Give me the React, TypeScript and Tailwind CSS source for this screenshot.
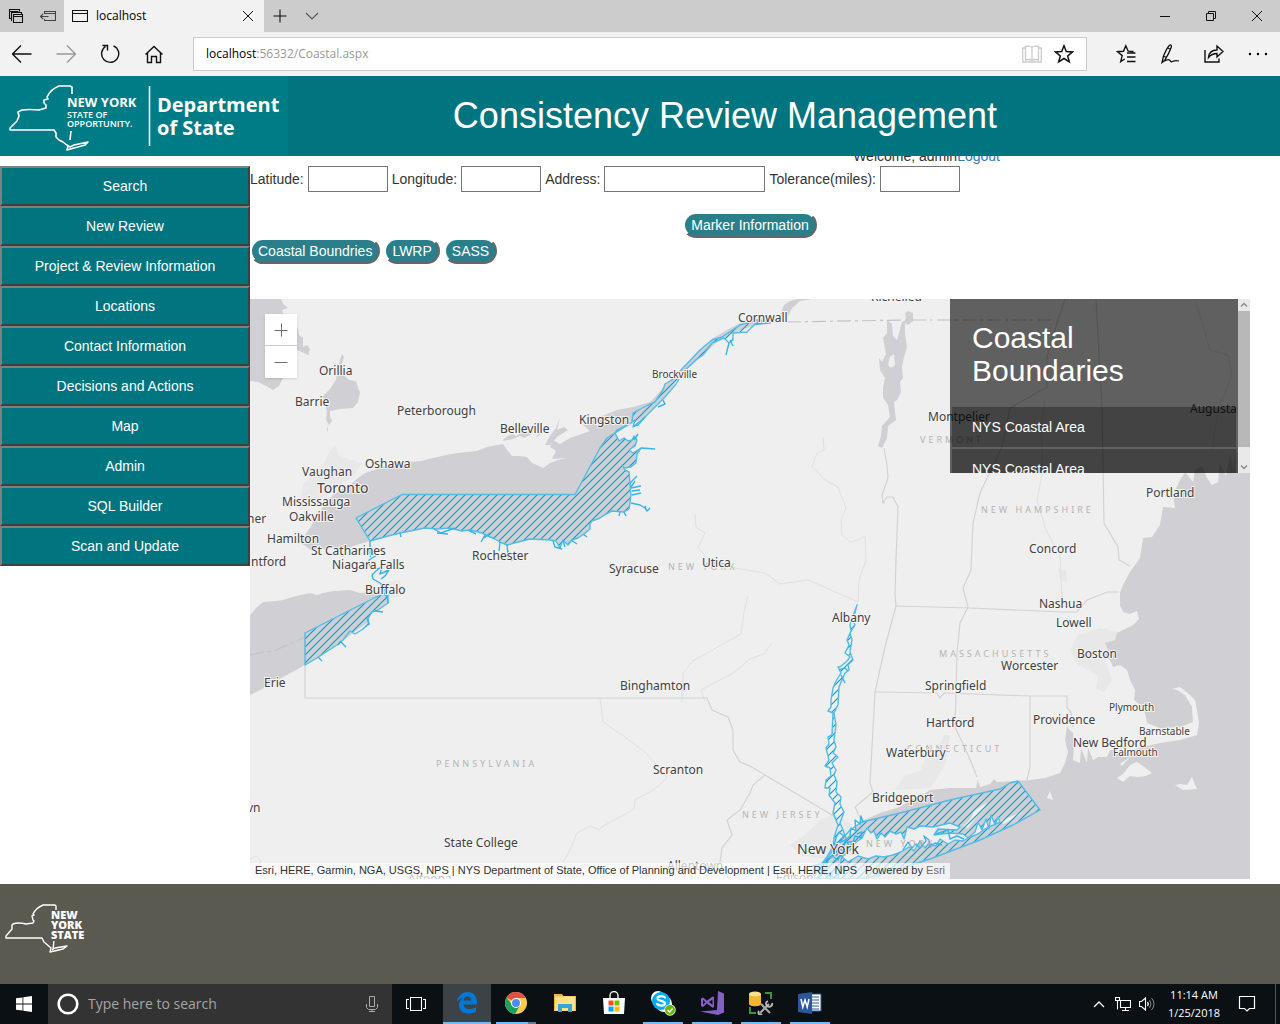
import type { ReactNode } from "react";

const SEGOE = "font-['Open_Sans','Noto_Sans',sans-serif]";

const navItems = [
  "Search",
  "New Review",
  "Project & Review Information",
  "Locations",
  "Contact Information",
  "Decisions and Actions",
  "Map",
  "Admin",
  "SQL Builder",
  "Scan and Update",
];

type LineIconProps = { size?: number; stroke?: string; children: ReactNode };

function LineIcon({ size = 20, stroke = "#111", children }: LineIconProps) {
  return (
    <svg width={size} height={size} viewBox={`0 0 ${size} ${size}`} fill="none" stroke={stroke} strokeWidth="1.3" aria-hidden="true">
      {children}
    </svg>
  );
}

function IconButton({ label, className, children }: { label: string; className: string; children: ReactNode }) {
  return (
    <button type="button" aria-label={label} className={`flex shrink-0 items-center justify-center ${className}`}>
      {children}
    </button>
  );
}

function TitleBar() {
  return (
    <div className="flex h-8 items-stretch bg-[#cccccc]">
      <IconButton label="Tabs you've set aside" className="w-8">
        <LineIcon size={16}>
          <path d="M3.500 10.500h-2v-9h10v2M1.500 3.500h9M4 12.500h-.5v-8h10v2M5.500 6.500h9v8h-9zM5.500 8.500h9" strokeWidth="1.1" />
        </LineIcon>
      </IconButton>
      <IconButton label="Set these tabs aside" className="w-8">
        <LineIcon size={16} stroke="#444">
          <path d="M4.500 6V3.500h11v9h-11V11M4.500 5.500h11M.5 8.500h8M3 6 .5 8.500 3 11" strokeWidth="1.1" />
        </LineIcon>
      </IconButton>
      <div className="flex w-[200px] items-center bg-[#f2f2f2] px-2">
        <LineIcon size={16}>
          <path d="M.5 2.500h15v11H.5zM.5 5.500h15" strokeWidth="1.1" />
        </LineIcon>
        <span className="ml-2 flex-1 text-xs text-black">localhost</span>
        <IconButton label="Close tab" className="size-4">
          <LineIcon size={12}>
            <path d="m1 1 10 10M11 1 1 11" strokeWidth="1" />
          </LineIcon>
        </IconButton>
      </div>
      <IconButton label="New tab" className="w-8">
        <LineIcon size={14}>
          <path d="M7 .5v13M.5 7h13" strokeWidth="1.1" />
        </LineIcon>
      </IconButton>
      <IconButton label="Show tab previews" className="w-8">
        <LineIcon size={14} stroke="#555">
          <path d="m1 4 6 6 6-6" strokeWidth="1.1" />
        </LineIcon>
      </IconButton>
      <div className="flex-1" />
      <IconButton label="Minimize" className="w-[46px]">
        <LineIcon size={10}>
          <path d="M0 5.500h10" strokeWidth="1" />
        </LineIcon>
      </IconButton>
      <IconButton label="Restore" className="w-[46px]">
        <LineIcon size={10}>
          <path d="M.5 2.500h7v7h-7zM2.500 2.500v-2h7v7h-2" strokeWidth="1" />
        </LineIcon>
      </IconButton>
      <IconButton label="Close" className="w-[46px]">
        <LineIcon size={10}>
          <path d="m0 0 10 10M10 0 0 10" strokeWidth="1" />
        </LineIcon>
      </IconButton>
    </div>
  );
}

function AddressBar() {
  return (
    <div className="flex h-11 items-center bg-[#f2f2f2]">
      <IconButton label="Back" className="w-11">
        <LineIcon size={20}>
          <path d="M.5 10h19M9 1.500.5 10 9 18.500" strokeWidth="1.400" />
        </LineIcon>
      </IconButton>
      <IconButton label="Forward" className="w-11">
        <LineIcon size={20} stroke="#999">
          <path d="M.5 10h19M11 1.500l8.500 8.500-8.500 8.500" strokeWidth="1.400" />
        </LineIcon>
      </IconButton>
      <IconButton label="Refresh" className="w-11">
        <LineIcon size={20}>
          <path d="M13.500 1.800A8.600 8.600 0 1 1 5.500 2.500M2.500 1.500h5v5" strokeWidth="1.400" />
        </LineIcon>
      </IconButton>
      <IconButton label="Home" className="w-11">
        <LineIcon size={20}>
          <path d="m1.500 10.500 8.500-8 8.500 8M3.500 9v9.500h4v-6h5v6h4V9" strokeWidth="1.400" />
        </LineIcon>
      </IconButton>
      <div className="ml-[17px] flex h-[34px] flex-1 items-center border border-[#cccccc] bg-white pr-1.5 pl-3 text-xs">
        <span className="flex-1 text-[#999]">
          <span className="text-black">localhost</span>:56332/Coastal.aspx
        </span>
        <IconButton label="Reading view" className="w-8">
          <LineIcon size={20} stroke="#ccc">
            <path d="M10 3.500C9 2 5.500 2 3.500 2.500v13.500c2-.5 5.500-.5 6.500.5 1-1 4.500-1 6.500-.5V2.500C14.500 2 11 2 10 3.500zv13M3.500 4H.700v14h18.600V4h-2.800" />
          </LineIcon>
        </IconButton>
        <IconButton label="Add to favorites" className="w-8">
          <LineIcon size={20}>
            <path d="m10 1.800 2.300 5.700 6.200.4-4.800 4 1.600 6L10 14.500l-5.300 3.400 1.600-6-4.800-4 6.200-.4z" strokeWidth="1.500" />
          </LineIcon>
        </IconButton>
      </div>
      <IconButton label="Hub" className="ml-[17px] w-11">
        <LineIcon size={20}>
          <path d="M11 9h8.500M11 13h8.500M11 17.500h8.500M17.500 7.500l-5.300-.3-2.400-5.400-2.300 5.500-6 .4 4.700 3.900-1.500 6 4-2.600" strokeWidth="1.400" />
        </LineIcon>
      </IconButton>
      <IconButton label="Add notes" className="w-11">
        <LineIcon size={20}>
          <path d="M2 18.500 3.500 12C6 6 8 2.500 9.500 1.200c1.500-.8 2.300.5 1.700 2C10 7 7 12.500 4.500 16.500zM3.500 12l2.700 1.500M8 4l2.500 1.500M2 18.500c3-2 6-3.500 7.500-2.500s1 2.500 3 1.500 3-1.500 6.500-.500" />
        </LineIcon>
      </IconButton>
      <IconButton label="Share" className="w-11">
        <LineIcon size={20}>
          <path d="M1 6v12h14v-3.500M4.500 13.500c.5-5 4-7.500 8.500-7.500V2l6 5.500-6 5.500V9.500c-3.500 0-6 1-8.500 4z" strokeWidth="1.400" />
        </LineIcon>
      </IconButton>
      <IconButton label="More" className="w-11">
        <svg width="20" height="4" viewBox="0 0 20 4" aria-hidden="true">
          <circle cx="2" cy="2" r="1.200" />
          <circle cx="10" cy="2" r="1.200" />
          <circle cx="18" cy="2" r="1.200" />
        </svg>
      </IconButton>
    </div>
  );
}

const stateOutline =
  "M72 18V11l-2-1H59q-8 3-12 11l1 2-4 1v3l2 2v3l-7 2q-10-1-17 0l-4 2 1 4-2 5-7 7v2h44l2 3v4l3 3 4 2 5 4-1 4 18-5 3-3-14 3-4 2-3-2M71 55l-1 9";

function DepartmentLogo() {
  return (
    <svg width="288" height="80" viewBox="0 0 288 80" className="shrink-0 bg-[#007c87]" role="img" aria-label="New York State of Opportunity. Department of State">
      <path d={stateOutline} fill="none" stroke="#fff" strokeWidth="1.600" strokeLinejoin="round" />
      <path d="M149.500 10v60" stroke="#fff" strokeWidth="1.500" />
      <g fill="#fff" className="font-['Open_Sans',sans-serif]">
        <text x="67" y="31" className="text-[13px] font-bold">NEW YORK</text>
        <text x="67" y="42" className="text-[9px] font-semibold">STATE OF</text>
        <text x="67" y="51" className="text-[9px] font-semibold">OPPORTUNITY.</text>
        <text x="157" y="36" className="text-[20px] font-bold">Department</text>
        <text x="157" y="59" className="text-[20px] font-bold">of State</text>
      </g>
    </svg>
  );
}

function FooterLogo() {
  return (
    <svg width="90" height="60" viewBox="0 0 90 60" role="img" aria-label="New York State">
      <path
        d="M56 10V6l-1-1H43q-7 3-10 9l1 1-2 1 1 4 1 1-1 2-7 1q-8-2-13 0l-1 1v4l-6 7v2h36l2 4 7 6-1 4 13-3 4-3-12 2-3 2M54 41l-1 8"
        fill="none"
        stroke="#fff"
        strokeWidth="1.400"
        strokeLinejoin="round"
      />
      <g fill="#fff" className="font-['Open_Sans',sans-serif] text-[11px] font-extrabold">
        <text x="51" y="19">NEW</text>
        <text x="51" y="29">YORK</text>
        <text x="51" y="39">STATE</text>
      </g>
    </svg>
  );
}

const lakeSouthShore =
  "L616 435 619 441 624 438 628 441 632 440 634 436 637 440 635 446 629 450 633 453 641 448 637 454 636 463 631 467 624 468 622 465 625 470 629 472 630 484 631 495 630 503 629 509 624 512 612 511 606 514 600 518 592 521 590 524 590 529 584 534 578 538 572 540 568 545 563 540 560 548 556 541 550 540 530 539 518 542 507 545 500 542 495 539 488 536 482 533 470 530 462 531 450 528 437 529 425 528 410 531 400 533 388 536 370 541";

const hudson =
  "M857 605 853 616 850 625 851 631 847 640 849 645 845 653 850 657 847 661 840 667 838 667 841 673 836 681 833 688 831 700 831 707 828 711 833 713 832 735 828 737 829 744 826 748 829 760 825 766 830 768 831 776 826 780 825 788 830 788 829 795 835 803 833 813 838 825 834 838 833 846 827 857 820 866 811 879 838 879 842 855 846 838 843 830 840 823 844 812 840 804 841 797 836 792 837 782 834 775 836 770 832 763 838 757 833 753 836 747 834 740 836 725 834 713 838 705 839 687 845 673 849 670 848 665 853 660 850 652 852 640 850 633 855 625 853 620Z";

const longIslandInner =
  "M862 838 867 828 871 833 874 831 877 839 881 833 885 837 890 831 896 834 901 832 904 839 907 827 914 829 920 826 933 827 950 823 960 827 957 830 938 829 934 835 950 833 963 834 968 838 975 832 978 822 982 830 986 819 989 829 991 815 995 825 998 817 1000 822 985 829 978 834 968 838 963 841 955 840 948 844 940 839 936 846 929 843 925 848 920 841 914 851 909 847 901 852 893 855 884 857 876 856 868 859 858 856 848 862 842 857 850 850 856 842Z";

function MapDrawing() {
  return (
    <svg
      viewBox="250 299 1000 580"
      preserveAspectRatio="xMinYMin slice"
      className="absolute inset-0 size-full"
      role="img"
      aria-label="Map of New York State coastal boundaries"
    >
      <defs>
        <pattern id="hatch" width="8" height="8" patternUnits="userSpaceOnUse">
          <path d="M-2 2 2-2M-2 10 10-2M6 10 10 6" fill="none" stroke="#00a2df" strokeWidth="1.200" />
        </pattern>
      </defs>

      {/* urban areas */}
      <g fill="#e8e8e9">
        <path d="M330 450 336 446 338 455 350 460 362 463 352 478 330 490 318 505 300 510 303 485 325 462Z" />
        <path d="M1078 635 1100 628 1120 632 1108 650 1106 662 1112 680 1104 692 1096 688 1098 676 1078 665 1070 650Z" />
        <path d="M805 835 820 820 832 815 850 822 852 840 830 860 800 855 790 845Z" />
        <path d="M895 790 905 776 921 770 925 758 938 750 944 735 950 735 945 765 930 788Z" />
        <path d="M383 583 400 580 402 596 388 598ZM623 562 636 560 638 572 632 577ZM1058 568 1066 570 1067 582 1060 580Z" />
      </g>

      {/* water bodies */}
      <g fill="#d0cfd4">
        <path d="M250 299H281L283 304 288 308 282 310 285 318 292 324 298 328 299 335 303 338 303 347 307 345 310 349 308 355 302 352 297 350 290 368 283 378 279 386 273 390 266 386 258 382 250 381Z" />
        <path d="M342 354 344 357 341 367 345 376 349 380 356 381 358 388 360 392 358 402 353 408 340 409 330 411 330 417 332 421 329 425 326 420 327 411 324 402 322 397 330 389 336 380 337 370 340 360ZM327 425 328 430 327 432Z" />
        <path
          d={
            "M300 542 310 528 316 518 322 508 333 495 341 490 350 485 358 478 365 473 383 467 410 462 421 461 433 458 446 455 457 453 467 452 477 451 487 447 497 445 503 444 507 450 512 456 520 456 527 457 532 463 537 465 543 468 550 463 558 460 567 458 552 459 556 451 550 447 553 440 560 444 570 438 590 431 583 425 600 417 617 410 633 407 650 402 657 395 667 383 683 367 700 350 713 338 727 330 740 323 757 319 780 315 784 305 790 301 798 299H812L800 301 792 308 788 316 770 323 750 327 733 333 717 342 700 358 680 375 672 387 658 405 645 417 630 425 615 433" +
            lakeSouthShore +
            " 350 547 323 549 312 551Z"
          }
        />
        <path d="M502 441 506 437 512 434 516 436 522 432 530 431 535 429 530 435 524 438 520 436 513 439 508 440ZM545 445 550 436 556 428 560 418 557 430 564 427 568 430 557 437 550 445ZM536 438 541 429 546 425 541 434Z" />
        <path d="M887 320 892 324 893 336 897 340 902 322 906 320 905 313 908 311 913 313 913 321 908 325 905 323 905 334 907 347 904 357 902 367 903 378 900 382 901 392 897 400 894 402 895 412 896 420 888 426 887 438 882 448 878 446 881 436 882 426 890 417 888 405 883 397 883 388 885 378 880 370 879 358 882 362 886 354 883 338 887 333Z" />
        <path d="M250 615 257 607 263 602 276 601 283 600 296 596 310 593 317 595 323 593 334 591 350 590 360 593 370 592 383 593 388 595 388 603 372 612 367 623 353 633 340 643 317 658 305 665 283 677 266 687 250 695Z" />
        <path d="M1250 440 1242 445 1239 457 1236 448 1234 470 1230 455 1226 476 1220 463 1218 482 1212 485 1207 478 1202 466 1195 470 1193 482 1185 472 1180 480 1173 495 1175 508 1163 507 1160 525 1152 537 1143 538 1140 558 1130 572 1123 585 1120 593 1120 605 1123 612 1130 614 1137 611 1139 619 1133 625 1123 630 1117 633 1115 640 1105 643 1108 650 1102 655 1110 660 1113 667 1120 665 1127 670 1130 680 1135 690 1134 700 1138 703 1145 713 1147 723 1160 728 1180 727 1193 722 1192 707 1185 695 1177 690 1172 689 1180 687 1190 695 1195 700 1197 710 1199 723 1197 735 1180 740 1160 743 1143 747 1127 752 1110 750 1107 757 1098 757 1093 760 1088 748 1087 763 1081 748 1080 763 1073 760 1074 745 1073 733 1067 727 1065 740 1068 752 1065 763 1060 773 1045 778 1030 780 1015 781 997 782 994 779 990 784 980 787 978 780 976 788 950 788 930 790 920 797 912 799 900 807 880 813 860 822 853 833 833 845 825 863 813 870 805 879H1250Z" />
      </g>
      <path d="M890 357 894 354 895 365 891 368 888 365Z" fill="#efefef" />

      {/* islands and fork peninsulas */}
      <g fill="#efefef">
        <path d={longIslandInner} />
        <path d="M963 827 971 818 974 811 983 805 987 803 984 809 978 815 968 828ZM1000 821 1012 816 1024 811 1019 815 1004 824Z" />
        <path d="M1117 778 1123 774 1130 765 1137 762 1143 766 1152 773 1146 776 1137 777 1130 776 1123 782ZM1175 785 1180 784 1187 785 1192 777 1197 789 1183 790ZM1047 798 1050 791 1053 800ZM1120 764 1130 757 1122 766Z" />
      </g>

      {/* rivers */}
      <g fill="none" stroke="#e0e0e5" strokeWidth="1">
        <path d="M823 437 824 450 817 453 812 467 825 480 838 487 846 508 841 520 842 535 850 542 858 540 865 536 866 560 859 580 858 602M695 514 696 527 705 533 698 548 712 562 740 569 765 573 780 584 808 580 840 594 858 602M748 596 744 612 741 634 714 649 693 661 683 673 682 702M772 643 764 654 750 659 735 672 701 690 705 701M600 698 603 722 625 737 645 752 660 768 667 778 655 789 635 800 634 809 600 828" />
        <path d="M576 879 563 862 570 850 577 833 590 826 600 830M1045 400 1041 430 1043 470 1037 500 1046 530 1060 555 1062 600M1195 299 1204 330 1210 350 1228 355 1232 375 1218 410 1212 450M250 860 256 856 261 861 258 869" />
      </g>

      {/* state and national borders */}
      <g fill="none" stroke="#d3d3d5" strokeWidth="1.200">
        <path d="M305 665V698L707 698 712 710 728 717 733 730 733 750 740 762 750 766 765 775 837 818M765 775 753 785 750 793 740 810 727 820 732 835 722 848 720 862" />
        <path d="M884 448 887 465 888 478 882 495 883 503 887 497 893 497 898 507 896 560 895 595 896 606 885 647 875 692 870 783 873 792 855 807 862 822" />
        <path d="M896 606 970 608 1063 612 1077 612 1087 600 1107 592 1119 592M875 692 937 693 940 698 944 693 1030 696 1067 696V708L1071 712 1073 727M1030 696V767L1027 780" />
        <path d="M1065 299 1058 320 1047 357 1047 387 1010 408 1002 447 980 493 973 523 971 570 963 588 968 607 960 623 957 653 956 693 955 727 969 757 977 777M1096 299 1102 407 1104 523 1118 547 1119 560 1130 566" />
        <path d="M787 322 905 320 1055 320M250 655 276 650 305 637" stroke="#c4c4c6" strokeDasharray="14 4 3 4" />
      </g>

      {/* coastal area boundaries */}
      <g fill="url(#hatch)" stroke="#52bce6" strokeWidth="1.400" strokeLinejoin="round">
        <path d={"M370 541 356 518 402 494.500H575L600 448 607 438 615 433" + lakeSouthShore + "Z"} />
        <path d="M615 433 617 430 632 422 633 413 648 405 655 402 663 390 665 384 672 380 683 368 700 350 712 340 722 337 740 325 757 320 770 323 755 324 747 332 733 333 733 340 729 343 724 338 712 343 703 355 697 359 683 372 676 384 665 397 655 407 645 417 633 427 635 420 620 430Z" />
        <path d="M305 633 382 594 388 595 388 603 378 610 372 612 368 618 369 624 363 629 355 634 350 631 343 640 337 645 326 652 317 658 305 665Z" />
        <path d={hudson} />
        <path fillRule="evenodd" d={"M850 830 862 822 900 813 950 800 1000 789 1010 783 1018 781 1040 810 1013 825 980 840 930 859 880 875 860 879H812L833 850Z" + longIslandInner} />
      </g>
      <g fill="none" stroke="#35b5ea" strokeWidth="1.400" strokeLinejoin="round">
        <path d="M370 541 370 553 377 555 369 560 370 566 378 569 372 575 373 579 380 583 384 587 384 593 387 597 388 603M378 569 382 567 380 574 389 570 385 576 381 579M372 552 370 557" />
        <path d="M641 448 655 449M634 440 638 434M630 483 637 476M631 487 635 481M631 488 641 486M632 491 640 490M632 495 641 493M631 503 640 505 645 508 647 511 650 508M620 512 619 516M624 512 626 516M645 506 646 510" />
        <path d="M400 533 401 537M434 529 441 533 449 530 455 528M437 533 448 534M468 530 476 534M485 535 481 542M484 538 490 533M500 542 499 551M507 545 508 555 512 561M508 550V558M553 541 555 547 562 549M563 540 565 547M571 540 577 544M583 534 587 537" />
        <path d="M729 343 728 347 726 355M730 340 733 346M663 400 665 404 658 407M755 324 768 323M645 417 638 425 634 426" />
        <path d="M375 611 383 612M340 641 346 647M318 657 322 661M338 645 341 641M367 618 369 625" />
        <path d="M841 675 845 683M839 670 845 668 848 671" />
        <path d="M833 850 836 838 839 832 844 836 840 842 846 840 850 836 851 828 856 831 855 820 860 824 861 816 863 822M836 856 840 850 838 848 844 851 849 846 847 842 853 842 855 836 861 838 862 832 857 834M825 861 832 856 838 860 840 855M815 870 823 866 819 877M812 866 828 862 823 873 833 877" />
        <path d="M936 834 948 830 950 839 957 836 964 839M903 850 908 842 912 848 916 844 920 848 926 841 924 836 929 840 930 847 935 843 942 845" />
      </g>

      {/* region names */}
      <g fill="#b4b4b6" className="font-['Noto_Sans',sans-serif] text-[9px] tracking-[3px]">
        <text x="920" y="443">VERMONT</text>
        <text x="981" y="513">NEW HAMPSHIRE</text>
        <text x="668" y="570">NEW YORK</text>
        <text x="939" y="657">MASSACHUSETTS</text>
        <text x="907" y="752">CONNECTICUT</text>
        <text x="436" y="767">PENNSYLVANIA</text>
        <text x="742" y="818">NEW JERSEY</text>
        <text x="866" y="847">NEW YORK</text>
      </g>

      {/* place names */}
      <g fill="#414141" stroke="#f4f4f4" strokeWidth="2" paintOrder="stroke" className="font-['Noto_Sans',sans-serif]">
        <g className="text-[12px]">
          <text x="319" y="375">Orillia</text>
          <text x="295" y="406">Barrie</text>
          <text x="397" y="415">Peterborough</text>
          <text x="500" y="433">Belleville</text>
          <text x="579" y="424">Kingston</text>
          <text x="738" y="322">Cornwall</text>
          <text x="871" y="301">Richelieu</text>
          <text x="365" y="468">Oshawa</text>
          <text x="302" y="476">Vaughan</text>
          <text x="282" y="506">Mississauga</text>
          <text x="289" y="521">Oakville</text>
          <text x="247" y="523">ner</text>
          <text x="267" y="543">Hamilton</text>
          <text x="311" y="555">St Catharines</text>
          <text x="332" y="569">Niagara Falls</text>
          <text x="251" y="566">ntford</text>
          <text x="365" y="594">Buffalo</text>
          <text x="264" y="687">Erie</text>
          <text x="472" y="560">Rochester</text>
          <text x="609" y="573">Syracuse</text>
          <text x="702" y="567">Utica</text>
          <text x="832" y="622">Albany</text>
          <text x="620" y="690">Binghamton</text>
          <text x="653" y="774">Scranton</text>
          <text x="444" y="847">State College</text>
          <text x="667" y="870">Allentown</text>
          <text x="408" y="883">Altoona</text>
          <text x="776" y="882">Edison</text>
          <text x="247" y="812">vn</text>
          <text x="928" y="421">Montpelier</text>
          <text x="1190" y="413">Augusta</text>
          <text x="1146" y="497">Portland</text>
          <text x="1029" y="553">Concord</text>
          <text x="1039" y="608">Nashua</text>
          <text x="1056" y="627">Lowell</text>
          <text x="1077" y="658">Boston</text>
          <text x="1001" y="670">Worcester</text>
          <text x="925" y="690">Springfield</text>
          <text x="926" y="727">Hartford</text>
          <text x="1033" y="724">Providence</text>
          <text x="1073" y="747">New Bedford</text>
          <text x="886" y="757">Waterbury</text>
          <text x="872" y="802">Bridgeport</text>
        </g>
        <g className="text-[14px]">
          <text x="317" y="493">Toronto</text>
          <text x="797" y="854">New York</text>
        </g>
        <g className="text-[10px]">
          <text x="652" y="378">Brockville</text>
          <text x="1109" y="711">Plymouth</text>
          <text x="1139" y="735">Barnstable</text>
          <text x="1113" y="756">Falmouth</text>
        </g>
      </g>
    </svg>
  );
}

function BoundaryPanel() {
  return (
    <aside className="absolute top-0 right-0 flex h-[174px] w-[300px]">
      <div className="h-full flex-1 overflow-hidden bg-black/60 text-white">
        <h2 className="px-[22px] pt-[22px] pb-5 text-[30px] leading-[33px]">
          Coastal
          <br />
          Boundaries
        </h2>
        <ul className="flex flex-col gap-0.5 px-0.5 text-sm">
          <li className="flex h-10 items-center bg-black/30 px-5">NYS Coastal Area</li>
          <li className="flex h-10 items-center bg-black/30 px-5">NYS Coastal Area</li>
        </ul>
      </div>
      <div className="flex w-3 flex-col bg-[#e9e9e9]">
        <IconButton label="Scroll up" className="h-3">
          <LineIcon size={8} stroke="#888">
            <path d="m1 5.500 3-3 3 3" />
          </LineIcon>
        </IconButton>
        <div className="flex-1">
          <div className="h-[136px] bg-[#b8b8b8]" />
        </div>
        <IconButton label="Scroll down" className="h-3">
          <LineIcon size={8} stroke="#888">
            <path d="m1 2.500 3 3 3-3" />
          </LineIcon>
        </IconButton>
      </div>
    </aside>
  );
}

function CoastalMap() {
  return (
    <section className="relative mt-[35px] h-[580px] overflow-hidden bg-[#efefef]">
      <MapDrawing />
      <div className="absolute top-[15px] left-[15px] flex w-8 flex-col divide-y divide-[#ccc] bg-white shadow-sm">
        <IconButton label="Zoom in" className="h-8">
          <LineIcon size={14} stroke="#6e6e6e">
            <path d="M7.500 .5v13M.5 7.500h13" strokeWidth="1" />
          </LineIcon>
        </IconButton>
        <IconButton label="Zoom out" className="h-8">
          <LineIcon size={14} stroke="#6e6e6e">
            <path d="M.5 7.500h13" strokeWidth="1" />
          </LineIcon>
        </IconButton>
      </div>
      <BoundaryPanel />
      <div className="absolute bottom-0 left-0 flex h-4 w-[700px] items-center justify-between bg-white/70 px-[5px] text-[11px] whitespace-nowrap text-[#323232]">
        <span>Esri, HERE, Garmin, NGA, USGS, NPS | NYS Department of State, Office of Planning and Development | Esri, HERE, NPS</span>
        <span>
          Powered by{" "}
          <a href="#esri" className="text-[#6e6e6e]">
            Esri
          </a>
        </span>
      </div>
    </section>
  );
}

function Field({ id, label, width }: { id: string; label: string; width: string }) {
  return (
    <>
      <label htmlFor={id}>{label}</label>
      <input id={id} type="text" className={`h-[26px] border border-[#767676] bg-white px-1 ${width}`} />
    </>
  );
}

function PillButton({ children }: { children: ReactNode }) {
  return (
    <button
      type="button"
      className="h-[26px] rounded-full border-2 border-t-white border-r-[#666] border-b-[#666] border-l-white bg-[#2a7f8b] px-1.5 leading-5 whitespace-nowrap text-white"
    >
      {children}
    </button>
  );
}

function SearchForm() {
  return (
    <form>
      <div className="flex items-center gap-1">
        <Field id="latitude" label="Latitude:" width="w-20" />
        <Field id="longitude" label="Longitude:" width="w-20" />
        <Field id="address" label="Address:" width="w-[161px]" />
        <Field id="tolerance" label="Tolerance(miles):" width="w-20" />
      </div>
      <div className="mt-5 flex justify-center">
        <PillButton>Marker Information</PillButton>
      </div>
      <div className="flex gap-1">
        <PillButton>Coastal Boundries</PillButton>
        <PillButton>LWRP</PillButton>
        <PillButton>SASS</PillButton>
      </div>
    </form>
  );
}

function EdgeIcon() {
  return (
    <svg width="24" height="24" viewBox="0 0 24 24" aria-hidden="true">
      <path
        fill="#0078d7"
        d="M2 11C2.800 5 7 1 12.500 1 18 1 22 4.500 22 11v2.500H8.500c.2 3 2.500 4.500 6 4.500 2.500 0 4.500-.7 6.500-1.800v4.500c-2 1.200-4.500 1.800-7.300 1.800C7.500 22.500 4 19 4 14c0-3.200 1.500-6 4.300-7.600C5.500 7 3.400 8.700 2 11zm6.500-1.500h7.700c0-2.700-1.300-4-3.600-4-2.200 0-3.800 1.500-4.100 4z"
      />
    </svg>
  );
}

function ChromeIcon() {
  return (
    <svg width="22" height="22" viewBox="0 0 22 22" aria-hidden="true">
      <circle cx="11" cy="11" r="11" fill="#ffcd46" />
      <path d="M11 11 1.500 5.500A11 11 0 0 1 20.800 6H11z" fill="#de5246" />
      <path d="M1.500 5.500A11 11 0 0 0 10 22l5-8.500-8-1z" fill="#1aa15f" />
      <circle cx="11" cy="11" r="5" fill="#fff" />
      <circle cx="11" cy="11" r="4" fill="#4c8bf5" />
    </svg>
  );
}

function ExplorerIcon() {
  return (
    <svg width="22" height="20" viewBox="0 0 22 20" aria-hidden="true">
      <path d="M0 1h8l1.500 2H22v15H0z" fill="#e8b84a" />
      <path d="M1 3.500h20V18H1z" fill="#fde08a" />
      <path d="M4 19v-8h14v8h-4v-4H8v4z" fill="#35a5da" />
    </svg>
  );
}

function StoreIcon() {
  return (
    <svg width="24" height="24" viewBox="0 0 24 24" aria-hidden="true">
      <path d="M8 7V4.500a3.500 3.500 0 0 1 8 0V7" fill="none" stroke="#fff" strokeWidth="1.300" />
      <path d="M1 7h22l-1 16H2z" fill="#fff" />
      <path d="M6.500 9.500h5v5h-5z" fill="#f25022" />
      <path d="M12.500 9.500h5v5h-5z" fill="#7fba00" />
      <path d="M6.500 15.500h5v5h-5z" fill="#00a4ef" />
      <path d="M12.500 15.500h5v5h-5z" fill="#ffb900" />
    </svg>
  );
}

function SkypeIcon() {
  return (
    <svg width="26" height="26" viewBox="0 0 26 26" aria-hidden="true">
      <circle cx="8" cy="8" r="7" fill="#fff" />
      <circle cx="14" cy="14" r="8" fill="#fff" />
      <circle cx="11" cy="11" r="9" fill="#00aff0" />
      <path d="M15 7.500c-2-2-7.500-1.800-7.500 1 0 3 7.500 1.700 7.500 4.800 0 3-6 3-8 .5" fill="none" stroke="#fff" strokeWidth="2.200" strokeLinecap="round" />
      <circle cx="20" cy="20" r="5.700" fill="#fff" />
      <circle cx="20" cy="20" r="5" fill="#6bb700" />
      <path d="m17.500 20 2 2 3-3.500" fill="none" stroke="#fff" strokeWidth="1.400" />
    </svg>
  );
}

function VisualStudioIcon() {
  return (
    <svg width="24" height="24" viewBox="0 0 24 24" aria-hidden="true">
      <path
        fill="#865fc5"
        fillRule="evenodd"
        d="M18 0 24 2.500v19L18 24 0 20.500l17-1.500zM1 7.500 3 6.500l4 3.200 5.500-4.200L14 6v10l-1.500.8L7 12.500 3 16 1 15zM3 9v4.500l2.500-2.200zM9 11l3.500 2.700V8.500z"
      />
    </svg>
  );
}

function DatabaseToolsIcon() {
  return (
    <svg width="24" height="24" viewBox="0 0 24 24" aria-hidden="true">
      <path d="M0 3v10c0 3 12 3 12 0V3z" fill="#f3b72f" />
      <ellipse cx="6" cy="3" rx="6" ry="2.500" fill="#fbe08c" />
      <path d="M16 2h6v6M1 16v6h6" fill="none" stroke="#3f8f46" strokeWidth="2" />
      <path d="m11 22 9-9M12 13l9 9" stroke="#aaa" strokeWidth="2" />
      <path d="M23 12a3 3 0 1 1-4-2M13 23a2 2 0 1 1-3-3" fill="none" stroke="#bbb" strokeWidth="1.800" />
    </svg>
  );
}

function WordIcon() {
  return (
    <svg width="24" height="24" viewBox="0 0 24 24" aria-hidden="true">
      <path d="M12 3h11v17H12z" fill="#fff" stroke="#2b579a" />
      <path d="M14 6h7M14 9h7M14 12h7M14 15h7M14 18h7" stroke="#2b579a" />
      <path d="M0 3 14 1v22L0 21z" fill="#2b579a" />
      <path d="m3 8 1.800 8L7 9l2.200 7L11 8" fill="none" stroke="#fff" strokeWidth="1.500" />
    </svg>
  );
}

const taskbarApps: { name: string; icon: ReactNode; state: "active" | "stacked" | "open" | "idle" }[] = [
  { name: "Microsoft Edge", icon: <EdgeIcon />, state: "active" },
  { name: "Google Chrome", icon: <ChromeIcon />, state: "stacked" },
  { name: "File Explorer", icon: <ExplorerIcon />, state: "idle" },
  { name: "Microsoft Store", icon: <StoreIcon />, state: "idle" },
  { name: "Skype for Business", icon: <SkypeIcon />, state: "open" },
  { name: "Visual Studio", icon: <VisualStudioIcon />, state: "open" },
  { name: "Database Tools", icon: <DatabaseToolsIcon />, state: "open" },
  { name: "Word", icon: <WordIcon />, state: "open" },
];

function Taskbar() {
  return (
    <div className={`flex h-10 items-stretch bg-[#0a1014] text-white ${SEGOE}`}>
      <IconButton label="Start" className="w-12">
        <svg width="16" height="16" viewBox="0 0 16 16" fill="#fff" aria-hidden="true">
          <path d="M0 2.300 6.500 1.400v6.200H0zM7.300 1.300 16 0v7.600H7.300zM0 8.400h6.500v6.200L0 13.700zM7.300 8.400H16V16l-8.700-1.300z" />
        </svg>
      </IconButton>
      <div className="flex w-[344px] items-center bg-[#333333] pr-3 pl-2">
        <svg width="24" height="24" viewBox="0 0 24 24" fill="none" aria-hidden="true">
          <circle cx="12" cy="12" r="9.300" stroke="#fff" strokeWidth="2.600" />
        </svg>
        <input
          type="text"
          aria-label="Search"
          placeholder="Type here to search"
          className="ml-2 min-w-0 flex-1 bg-transparent text-sm text-white placeholder:text-[#a5a5a5]"
        />
        <IconButton label="Voice search" className="size-4">
          <LineIcon size={16} stroke="#aaa">
            <path d="M5.500.5h5v10h-5zM2.500 8v3.500l2 2h7l2-2V8M8 13.500v2M5 15.500h6" strokeWidth="1" />
          </LineIcon>
        </IconButton>
      </div>
      <IconButton label="Task view" className="mr-[3px] w-12">
        <LineIcon size={20} stroke="#fff">
          <path d="M4.500 3.500h11v13h-11zM3 5.500H.5v9H3M17 5.500h2.500v9H17" strokeWidth="1.100" />
        </LineIcon>
      </IconButton>
      <div className="flex gap-px">
        {taskbarApps.map((app) => (
          <button
            key={app.name}
            type="button"
            aria-label={app.name}
            className={`flex w-12 flex-col items-center ${app.state === "active" ? "bg-[#3c4246]" : ""}`}
          >
            <span className="flex flex-1 items-center">{app.icon}</span>
            {app.state === "active" && <span className="h-0.5 w-full bg-[#76b9ed]" />}
            {app.state === "open" && <span className="h-0.5 w-10 bg-[#76b9ed]" />}
            {app.state === "stacked" && <span className="h-0.5 w-10 border-r-8 border-[#54809f] bg-[#76b9ed]" />}
            {app.state === "idle" && <span className="h-0.5" />}
          </button>
        ))}
      </div>
      <div className="flex-1" />
      <IconButton label="Show hidden icons" className="w-6">
        <LineIcon size={12} stroke="#fff">
          <path d="m1 9 5-5 5 5" />
        </LineIcon>
      </IconButton>
      <IconButton label="Network" className="w-6">
        <LineIcon size={16} stroke="#fff">
          <path d="M5.500 4.500h10v7h-10zM10.500 11.500v3M7 14.500h7M.5 1.500h4v3h-4zM2.500 4.500v9" strokeWidth="1.100" />
        </LineIcon>
      </IconButton>
      <IconButton label="Volume" className="w-6">
        <LineIcon size={16} stroke="#fff">
          <path d="M.5 5.500h2l4-3.500v12l-4-3.500h-2z" strokeWidth="1.100" />
          <path d="M8.500 6q1.500 2 0 4" />
          <path d="M10.500 4q3 4 0 8M12.500 2q5 6 0 12" stroke="#888" strokeWidth="1" />
        </LineIcon>
      </IconButton>
      <div className="flex w-[70px] flex-col items-center justify-center text-[11px] leading-[18px] whitespace-nowrap">
        <span>11:14 AM</span>
        <span>1/25/2018</span>
      </div>
      <IconButton label="Action center" className="mr-1 w-9">
        <LineIcon size={18} stroke="#fff">
          <path d="M1.500 1.500h15v12h-5L9 16l-2.500-2.500h-5z" strokeWidth="1.200" />
        </LineIcon>
      </IconButton>
      <button type="button" aria-label="Show desktop" className="ml-1.5 w-[5px] border-l border-[#555]" />
    </div>
  );
}

export default function App() {
  return (
    <div className="flex min-h-screen flex-col bg-white font-['Liberation_Sans',Arial,sans-serif] text-sm text-[#333]">
      <div className={SEGOE}>
        <TitleBar />
        <AddressBar />
      </div>

      <header className="relative z-10 flex h-20 items-center bg-[#00757f]">
        <DepartmentLogo />
        <h1 className="mr-[118px] flex-1 text-center text-4xl text-white">Consistency Review Management</h1>
      </header>

      <div className="-mt-2.5 mr-[30px] ml-[250px]">
        <p className="w-3/4 text-right leading-5">
          Welcome, admin
          <a href="#logout" className="text-[#337ab7]">
            Logout
          </a>
        </p>
      </div>

      <div className="flex flex-1 items-start">
        <nav className="flex w-[250px] shrink-0 flex-col">
          {navItems.map((item) => (
            <button
              key={item}
              type="button"
              className="h-10 border-2 border-t-[#808080] border-r-[#404040] border-b-[#404040] border-l-[#808080] bg-[#00757f] text-white"
            >
              {item}
            </button>
          ))}
        </nav>
        <main className="mr-[30px] mb-[5px] min-w-0 flex-1">
          <SearchForm />
          <CoastalMap />
        </main>
      </div>

      <footer className="h-[100px] bg-[#5b5a51] pt-4">
        <FooterLogo />
      </footer>
      <Taskbar />
    </div>
  );
}
